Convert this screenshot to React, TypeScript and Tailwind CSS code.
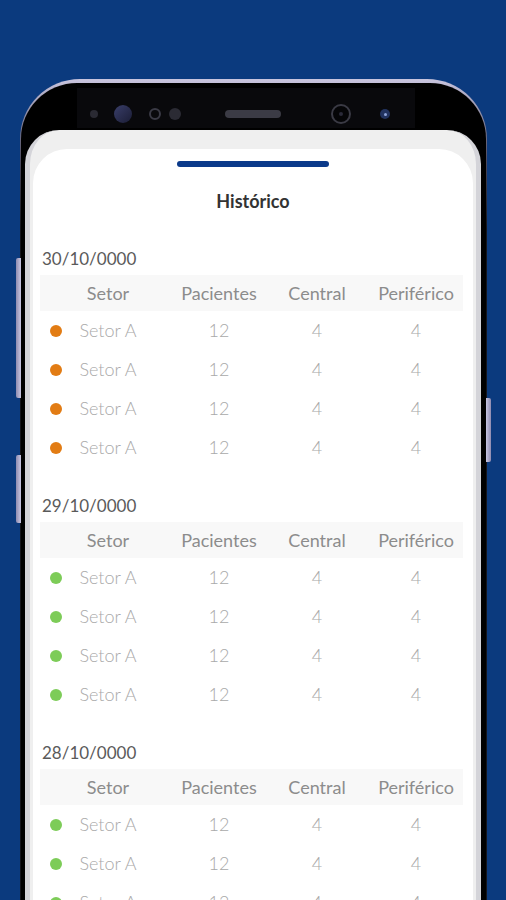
import React from 'react'

type Row = { setor: string; pacientes: number; central: number; periferico: number }

const makeRows = (): Row[] =>
  Array.from({ length: 4 }, () => ({ setor: 'Setor A', pacientes: 12, central: 4, periferico: 4 }))

const sections = [
  { date: '30/10/0000', color: 'bg-[#e27c14]', rows: makeRows() },
  { date: '29/10/0000', color: 'bg-[#7dcc58]', rows: makeRows() },
  { date: '28/10/0000', color: 'bg-[#7dcc58]', rows: makeRows() },
]

function Cells({ a, b, c, d }: { a: React.ReactNode; b: React.ReactNode; c: React.ReactNode; d: React.ReactNode }) {
  return (
    <>
      <div className="w-[80px] shrink-0 text-center">{a}</div>
      <div className="ml-[4px] w-[134px] shrink-0 text-center">{b}</div>
      <div className="w-[62px] shrink-0 text-center">{c}</div>
      <div className="ml-[14px] w-[108px] shrink-0 text-center">{d}</div>
    </>
  )
}

function Section({ date, color, rows }: { date: string; color: string; rows: Row[] }) {
  return (
    <div className="mb-[29px]">
      <div className="pl-[9px] text-[17px] leading-[20px] text-[#5a5a5a]">{date}</div>
      <div className="mt-[6px] ml-[7px] mr-[10px]">
        <div className="flex h-[36px] items-center bg-[#f8f8f8] text-[18px] text-[#8c8c8c]">
          <div className="w-[28px] shrink-0" />
          <Cells a="Setor" b="Pacientes" c="Central" d="Periférico" />
        </div>
        {rows.map((r, i) => (
          <div key={i} className="flex h-[39px] items-center text-[18px] font-light text-[#a9a9a9]">
            <div className="w-[28px] shrink-0 pl-[10px]">
              <div className={`h-[12px] w-[12px] rounded-full ${color}`} />
            </div>
            <Cells a={r.setor} b={r.pacientes} c={r.central} d={r.periferico} />
          </div>
        ))}
      </div>
    </div>
  )
}

function Bezel() {
  return (
    <div className="flex h-[46px] shrink-0 items-start pl-[52px] pt-[4px]">
      <div className="flex h-[40px] w-[338px] items-center bg-[#09090c] pl-[13px] pt-[12px]">
        <div className="h-[8px] w-[8px] rounded-full bg-[#2a2a33]" />
        <div className="ml-[16px] h-[18px] w-[18px] rounded-full bg-gradient-to-br from-[#3a3f6a] to-[#1b1d36]" />
        <div className="ml-[17px] h-[12px] w-[12px] rounded-full border-2 border-[#3a3a45] bg-[#09090c]" />
        <div className="ml-[8px] h-[12px] w-[12px] rounded-full bg-[#2b2b34]" />
        <div className="ml-[44px] h-[8px] w-[56px] rounded-full bg-[#3b3b45]" />
        <div className="ml-[50px] flex h-[20px] w-[20px] items-center justify-center rounded-full border-2 border-[#3a3a44] bg-[#050507]">
          <div className="h-[4px] w-[4px] rounded-full bg-[#2a2a38]" />
        </div>
        <div className="ml-[29px] flex h-[10px] w-[10px] items-center justify-center rounded-full bg-[#22335f]">
          <div className="h-[3px] w-[3px] rounded-full bg-[#8fa4d8]" />
        </div>
      </div>
    </div>
  )
}

export default function App() {
  return (
    <div className="h-[900px] w-[506px] overflow-hidden bg-[#0b3a7e] font-['Lato',sans-serif]">
      <div className="relative ml-[20px] mt-[79px] h-[830px] w-[467px]">
        {/* side buttons */}
        <div className="absolute left-[-4px] top-[179px] h-[140px] w-[5px] rounded-l-[2px] bg-gradient-to-r from-[#8f8cb0] to-[#c9c6e2]" />
        <div className="absolute left-[-4px] top-[376px] h-[68px] w-[5px] rounded-l-[2px] bg-gradient-to-r from-[#8f8cb0] to-[#c9c6e2]" />
        <div className="absolute right-[-4px] top-[319px] h-[64px] w-[5px] rounded-r-[2px] bg-gradient-to-l from-[#8f8cb0] to-[#c9c6e2]" />

        <div className="h-full rounded-t-[60px] bg-gradient-to-b from-[#c9c5de] via-[#4a485c] via-[10%] to-[#15151b] to-[18%] px-[1px] pt-[4px]">
          <div className="flex h-full flex-col rounded-t-[56px] bg-black pl-[4px] pr-[5px] pt-[1px]">
            <Bezel />

            {/* screen */}
            <div className="flex-1 overflow-hidden rounded-t-[34px] border-x-[5px] border-x-[#d4d4d9] bg-[#efefef]">
              <div className="mx-[3px] mt-[19px] h-full rounded-t-[34px] bg-white pt-[12px]">
                <div className="mx-auto h-[6px] w-[152px] rounded-full bg-[#0b3a8a]" />
                <div className="mt-[22px] text-center text-[18px] font-bold leading-[24px] text-[#333333]">
                  Histórico
                </div>
                <div className="mt-[36px]">
                  {sections.map((s) => (
                    <Section key={s.date} {...s} />
                  ))}
                </div>
              </div>
            </div>
          </div>
        </div>
      </div>
    </div>
  )
}
